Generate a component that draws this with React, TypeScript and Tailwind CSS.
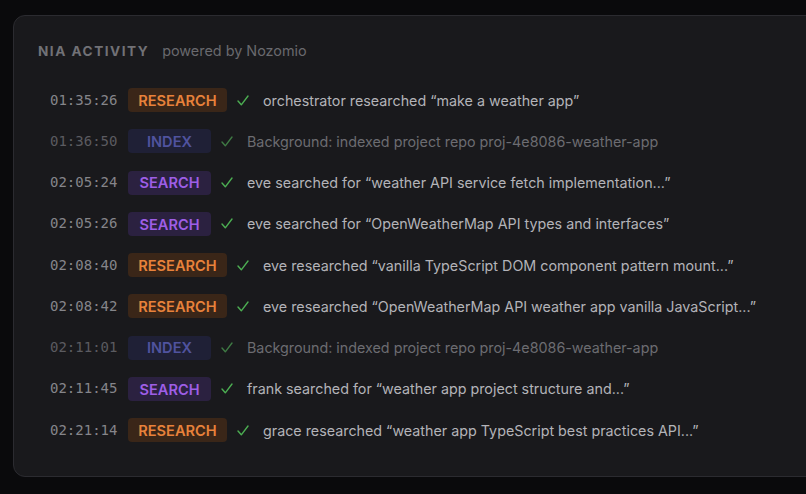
import React from "react";

type Kind = "RESEARCH" | "SEARCH" | "INDEX";
const rows: { t: string; k: Kind; d: string }[] = [
  { t: "01:35:26", k: "RESEARCH", d: "orchestrator researched \u201cmake a weather app\u201d" },
  { t: "01:36:50", k: "INDEX", d: "Background: indexed project repo proj-4e8086-weather-app" },
  { t: "02:05:24", k: "SEARCH", d: "eve searched for \u201cweather API service fetch implementation...\u201d" },
  { t: "02:05:26", k: "SEARCH", d: "eve searched for \u201cOpenWeatherMap API types and interfaces\u201d" },
  { t: "02:08:40", k: "RESEARCH", d: "eve researched \u201cvanilla TypeScript DOM component pattern mount...\u201d" },
  { t: "02:08:42", k: "RESEARCH", d: "eve researched \u201cOpenWeatherMap API weather app vanilla JavaScript...\u201d" },
  { t: "02:11:01", k: "INDEX", d: "Background: indexed project repo proj-4e8086-weather-app" },
  { t: "02:11:45", k: "SEARCH", d: "frank searched for \u201cweather app project structure and...\u201d" },
  { t: "02:21:14", k: "RESEARCH", d: "grace researched \u201cweather app TypeScript best practices API...\u201d" },
];

function Badge({ k }: { k: Kind }) {
  if (k === "RESEARCH")
    return (
      <span className="inline-flex h-6 w-[99px] items-center justify-center rounded-[4px] bg-[#3a2618] pt-[2px] text-[14.6px] font-semibold leading-none text-[#e8823b]">
        RESEARCH
      </span>
    );
  if (k === "SEARCH")
    return (
      <span className="inline-flex h-6 w-[83px] items-center justify-center rounded-[4px] bg-[#2b2140] pt-[2px] text-[14.6px] font-semibold leading-none text-[#9e5ee6]">
        SEARCH
      </span>
    );
  return (
    <span className="inline-flex h-6 w-[83px] items-center justify-center rounded-[4px] bg-[#1f2036] pt-[2px] text-[14.6px] font-semibold leading-none text-[#50539e]">
      INDEX
    </span>
  );
}

function Check({ dim }: { dim: boolean }) {
  return (
    <svg
      width="12"
      height="11"
      viewBox="0 0 12 11"
      fill="none"
      className="ml-[10px] shrink-0"
    >
      <path
        d="M1 6 L4.3 9.8 L11 1"
        stroke={dim ? "#3f7a44" : "#4cae52"}
        strokeWidth="1.4"
        strokeLinecap="round"
        strokeLinejoin="round"
      />
    </svg>
  );
}

export default function App() {
  return (
    <div
      className="h-[494px] w-[806px] overflow-hidden bg-[#0a0a0c] pl-[13px] pt-[15px]"
      style={{ fontFamily: "Inter, 'Noto Sans', sans-serif" }}
    >
      <div className="h-[462px] w-[840px] rounded-[12px] border border-[#2b2b30] bg-[#19191c] pl-[24px] pt-[24px]">
        <div className="flex items-baseline gap-[13px]">
          <span className="text-[13.6px] font-bold tracking-[0.11em] text-[#717176]">NIA ACTIVITY</span>
          <span className="text-[14.4px] text-[#69696e]">powered by Nozomio</span>
        </div>
        <div className="mt-[18px] flex flex-col pl-[12px]">
          {rows.map((r, i) => {
            const dim = r.k === "INDEX";
            return (
              <div key={i} className="flex h-[41.25px] items-center">
                <span
                  className={`w-[78px] text-[14px] ${dim ? "text-[#5b5b60]" : "text-[#85858a]"}`}
                  style={{ fontFamily: "'DejaVu Sans Mono', monospace" }}
                >
                  {r.t}
                </span>
                <Badge k={r.k} />
                <Check dim={dim} />
                <span className={`ml-[14px] whitespace-nowrap text-[14.3px] ${dim ? "text-[#6c6c71]" : "text-[#b3b3b8]"}`}>
                  {r.d}
                </span>
              </div>
            );
          })}
        </div>
      </div>
    </div>
  );
}
